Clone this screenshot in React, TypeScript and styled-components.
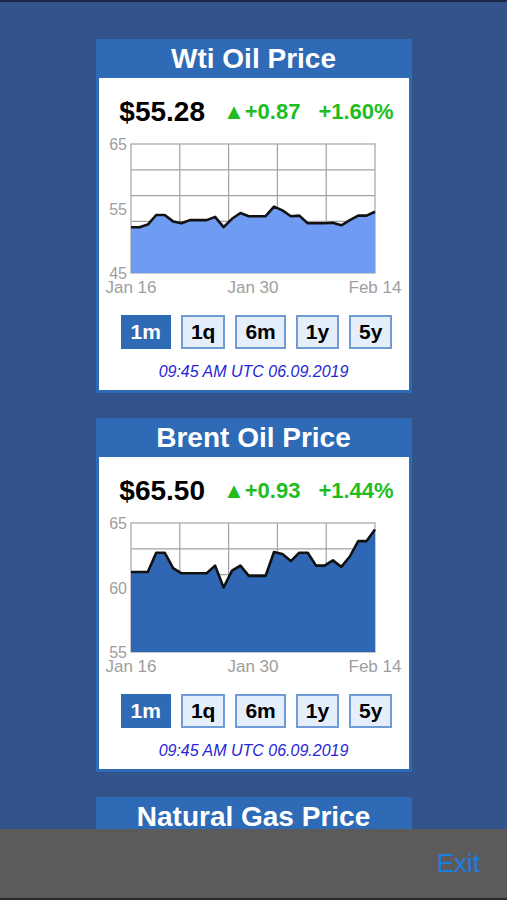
import React from 'react';
import styled, { createGlobalStyle } from 'styled-components';

const GlobalStyle = createGlobalStyle`
    html, body {
        margin: 0;
        padding: 0;
        background: #32548a;
    }
    * {
        box-sizing: border-box;
    }
`;

const Screen = styled.div`
    width: 507px;
    height: 900px;
    display: flex;
    flex-direction: column;
    background: #32548a;
    font-family: 'Liberation Sans', Arial, sans-serif;
    overflow: hidden;
`;

const TopEdge = styled.div`
    height: 2px;
    background: #1b2a42;
    flex: none;
`;

const Scroller = styled.div`
    flex: 1;
    overflow: hidden;
    display: flex;
    flex-direction: column;
    align-items: center;
    gap: 25px;
    padding-top: 37px;
`;

const Card = styled.section`
    width: 316px;
    flex: none;
    border: 3px solid #2e6ab6;
    border-top: none;
    background: #fff;
`;

const Header = styled.h2`
    margin: 0 -3px;
    height: 39px;
    background: #2e6ab6;
    color: #fff;
    font-size: 28px;
    font-weight: bold;
    line-height: 39px;
    text-align: center;
`;

const PriceRow = styled.div`
    margin-top: 18px;
    height: 32px;
    display: flex;
    justify-content: center;
    align-items: center;
    gap: 18px;
    padding-left: 6px;
`;

const Price = styled.span`
    font-size: 28px;
    font-weight: bold;
    color: #000;
`;

const Change = styled.span`
    font-size: 22px;
    font-weight: bold;
    color: #1fbd1f;
`;

const ChartBox = styled.svg`
    display: block;
    margin-top: 8px;
`;

const Ranges = styled.div`
    margin-top: 19px;
    display: flex;
    justify-content: center;
    gap: 10px;
    padding-left: 6px;
`;

const RangeButton = styled.button<{ $active?: boolean }>`
    height: 34px;
    padding: 0 8px;
    border: 2px solid ${(p) => (p.$active ? '#2e6ab6' : '#6f9bd6')};
    background: ${(p) => (p.$active ? '#2e6ab6' : '#e4effb')};
    color: ${(p) => (p.$active ? '#fff' : '#000')};
    font-family: 'Liberation Sans', Arial, sans-serif;
    font-size: 21px;
    font-weight: bold;
    line-height: 30px;
    cursor: pointer;
`;

const Stamp = styled.div`
    margin-top: 13px;
    margin-bottom: 8px;
    height: 20px;
    line-height: 20px;
    text-align: center;
    font-size: 16px;
    font-style: italic;
    color: #2626d6;
`;

const BottomBar = styled.footer`
    height: 71px;
    flex: none;
    background: #5b5b5b;
    border-bottom: 2px solid #2a2a2a;
    display: flex;
    justify-content: flex-end;
    align-items: center;
    padding-right: 27px;
`;

const ExitLink = styled.a`
    font-size: 26px;
    color: #1a7fe2;
    text-decoration: none;
    cursor: pointer;
`;

type ChartProps = {
    values: number[];
    min: number;
    max: number;
    fill: string;
};

// plot area inside the svg
const PX = 32;
const PY = 8;
const PW = 244;
const PH = 129;

const PriceChart: React.FC<ChartProps> = ({ values, min, max, fill }) => {
    const step = PW / (values.length - 1);
    const toY = (v: number) => PY + ((max - v) / (max - min)) * PH;
    const line = values.map((v, i) => `${(PX + i * step).toFixed(1)},${toY(v).toFixed(1)}`).join(' ');
    const area = `${PX},${PY + PH} ${line} ${PX + PW},${PY + PH}`;
    const mid = (min + max) / 2;

    return (
        <ChartBox width="310" height="160" viewBox="0 0 310 160">
            <rect x={PX} y={PY} width={PW} height={PH} fill="#fff" stroke="#a3a3a3" strokeWidth="1.2" />
            {[1, 2, 3, 4].map((i) => (
                <line key={'h' + i} x1={PX} x2={PX + PW} y1={PY + (PH * i) / 5} y2={PY + (PH * i) / 5} stroke="#a3a3a3" strokeWidth="1.2" />
            ))}
            {[1, 2, 3, 4].map((i) => (
                <line key={'v' + i} y1={PY} y2={PY + PH} x1={PX + (PW * i) / 5} x2={PX + (PW * i) / 5} stroke="#a3a3a3" strokeWidth="1.2" />
            ))}
            <polygon points={area} fill={fill} />
            <polyline points={line} fill="none" stroke="#111" strokeWidth="2.6" strokeLinejoin="round" />
            <g fontFamily="'Liberation Sans', Arial, sans-serif" fontSize="16" fill="#9e9e9e">
                <text x={PX - 4} y={PY + 6} textAnchor="end">{max}</text>
                <text x={PX - 4} y={PY + PH / 2 + 6} textAnchor="end">{mid}</text>
                <text x={PX - 4} y={PY + PH + 6} textAnchor="end">{min}</text>
                <text x={PX} y={157} fontSize="17" textAnchor="middle">Jan 16</text>
                <text x={PX + PW / 2} y={157} fontSize="17" textAnchor="middle">Jan 30</text>
                <text x={PX + PW} y={157} fontSize="17" textAnchor="middle">Feb 14</text>
            </g>
        </ChartBox>
    );
};

type Quote = {
    title: string;
    price: string;
    change: string;
    percent: string;
    values: number[];
    min: number;
    max: number;
    fill: string;
};

const quotes: Quote[] = [
    {
        title: 'Wti Oil Price',
        price: '$55.28',
        change: '+0.87',
        percent: '+1.60%',
        min: 45,
        max: 65,
        fill: '#6f9cf2',
        values: [
            52.1, 52.1, 52.5, 54.0, 54.0, 53.0, 52.7, 53.2, 53.2, 53.2, 53.7, 52.1, 53.4, 54.3, 53.8,
            53.8, 53.8, 55.3, 54.7, 53.8, 53.9, 52.7, 52.7, 52.7, 52.8, 52.4, 53.2, 53.9, 53.9, 54.5,
        ],
    },
    {
        title: 'Brent Oil Price',
        price: '$65.50',
        change: '+0.93',
        percent: '+1.44%',
        min: 55,
        max: 65,
        fill: '#2f67b4',
        values: [
            61.2, 61.2, 61.2, 62.7, 62.7, 61.5, 61.1, 61.1, 61.1, 61.1, 61.7, 60.0, 61.3, 61.7, 60.9,
            60.9, 60.9, 62.75, 62.6, 62.05, 62.7, 62.7, 61.7, 61.7, 62.1, 61.6, 62.4, 63.6, 63.6, 64.5,
        ],
    },
    {
        title: 'Natural Gas Price',
        price: '$2.58',
        change: '+0.03',
        percent: '+1.18%',
        min: 2,
        max: 4,
        fill: '#6f9cf2',
        values: [
            3.4, 3.3, 3.2, 3.1, 3.1, 3.0, 2.9, 2.9, 2.8, 2.8, 2.8, 2.7, 2.8, 2.8, 2.7,
            2.7, 2.6, 2.6, 2.6, 2.6, 2.6, 2.6, 2.5, 2.6, 2.6, 2.6, 2.5, 2.5, 2.6, 2.6,
        ],
    },
];

const ranges = ['1m', '1q', '6m', '1y', '5y'];

const QuoteCard: React.FC<{ quote: Quote }> = ({ quote }) => (
    <Card>
        <Header>{quote.title}</Header>
        <PriceRow>
            <Price>{quote.price}</Price>
            <Change>▲{quote.change}</Change>
            <Change>{quote.percent}</Change>
        </PriceRow>
        <PriceChart values={quote.values} min={quote.min} max={quote.max} fill={quote.fill} />
        <Ranges>
            {ranges.map((r) => (
                <RangeButton key={r} $active={r === '1m'}>
                    {r}
                </RangeButton>
            ))}
        </Ranges>
        <Stamp>09:45 AM UTC 06.09.2019</Stamp>
    </Card>
);

const App: React.FC = () => {
    return (
        <Screen>
            <GlobalStyle />
            <TopEdge />
            <Scroller>
                {quotes.map((q) => (
                    <QuoteCard key={q.title} quote={q} />
                ))}
            </Scroller>
            <BottomBar>
                <ExitLink>Exit</ExitLink>
            </BottomBar>
        </Screen>
    );
};

export default App;
